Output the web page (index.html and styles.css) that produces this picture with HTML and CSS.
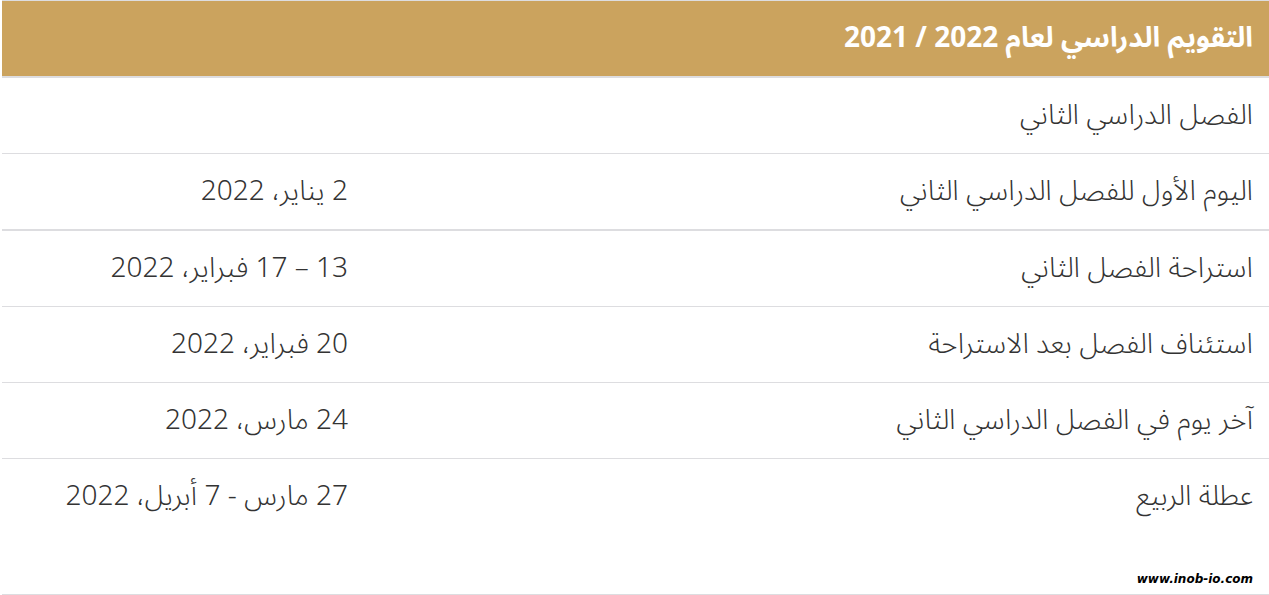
FILE: index.html
```html
<!DOCTYPE html>
<html lang="ar" dir="rtl">
<head>
<meta charset="utf-8">
<title>التقويم الدراسي</title>
<link rel="stylesheet" href="styles.css">
</head>
<body>
<div class="calendar">
  <div class="head">التقويم الدراسي لعام 2022 / 2021</div>
  <div class="row"><div class="label">الفصل الدراسي الثاني</div><div class="date"></div></div>
  <div class="row thick"><div class="label">اليوم الأول للفصل الدراسي الثاني</div><div class="date">2 يناير، 2022</div></div>
  <div class="row"><div class="label">استراحة الفصل الثاني</div><div class="date">13 – 17 فبراير، 2022</div></div>
  <div class="row"><div class="label">استئناف الفصل بعد الاستراحة</div><div class="date">20 فبراير، 2022</div></div>
  <div class="row"><div class="label">آخر يوم في الفصل الدراسي الثاني</div><div class="date">24 مارس، 2022</div></div>
  <div class="row last">
    <div class="cells"><div class="label">عطلة الربيع</div><div class="date">27 مارس - 7 أبريل، 2022</div></div>
    <div class="mark" dir="ltr">www.inob-io.com</div>
  </div>
</div>
</body>
</html>
```
FILE: styles.css
```css
html, body {
  margin: 0;
  padding: 0;
  background: #fff;
}
body {
  font-family: "Noto Sans", "Noto Sans Arabic", "DejaVu Sans", sans-serif;
  color: #333;
}
.calendar {
  width: 1267px;
  border-top: 1px solid #dddde0;
}
.head {
  height: 75px;
  background: #cba35e;
  color: #fff;
  font-weight: bold;
  font-size: 28px;
  display: flex;
  align-items: center;
  padding: 0 16px;
  border-bottom: 2px solid #dddde0;
}
.row {
  display: flex;
  height: 75px;
  border-bottom: 1px solid #dddde0;
  font-size: 28px;
  font-weight: 300;
}
.row.thick {
  border-bottom-width: 2px;
}
.label {
  width: 905px;
  box-sizing: border-box;
  padding: 0 16px;
  display: flex;
  align-items: center;
}
.date {
  flex: 1;
  padding: 0 16px;
  display: flex;
  align-items: center;
}
.row.last {
  height: 135px;
  flex-direction: column;
}
.cells {
  display: flex;
  height: 75px;
}
.mark {
  margin-top: auto;
  padding: 0 16px 8px;
  text-align: right;
  font-family: "DejaVu Sans", sans-serif;
  font-weight: bold;
  font-style: italic;
  font-size: 12px;
  color: #000;
}
```
